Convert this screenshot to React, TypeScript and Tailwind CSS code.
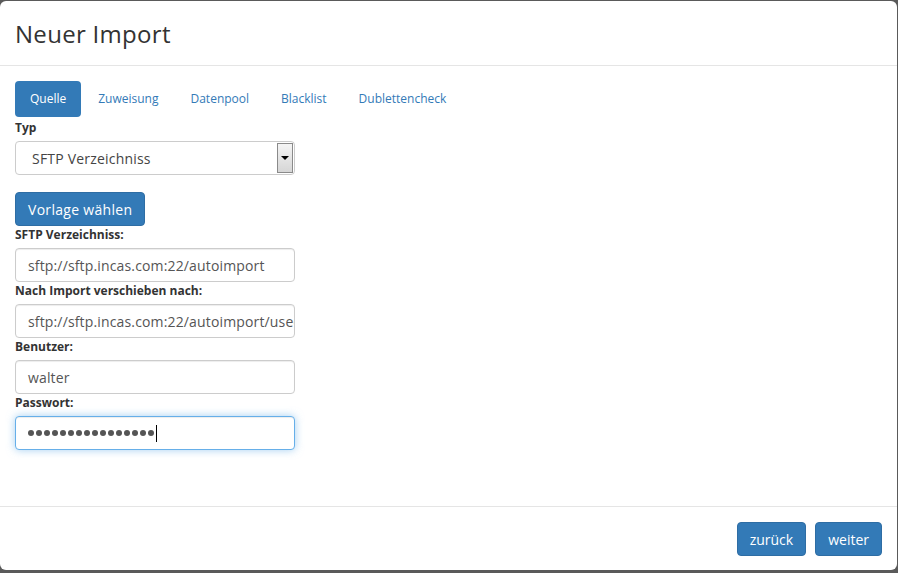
import React from "react";

const font = { fontFamily: '"Open Sans", "Noto Sans", sans-serif' };

function Label({ children }: { children: React.ReactNode }) {
  return (
    <div className="text-[12px] font-bold leading-[17px] text-[#333] mb-[5px]">{children}</div>
  );
}

function Input({ value }: { value: string }) {
  return (
    <div className="w-[280px] h-[34px] border border-[#ccc] rounded-[4px] bg-white px-[12px] flex items-center text-[14px] tracking-[0.15px] text-[#555] overflow-hidden whitespace-nowrap shadow-[inset_0_1px_1px_rgba(0,0,0,0.075)]">
      {value}
    </div>
  );
}

export default function App() {
  const tabs = ["Zuweisung", "Datenpool", "Blacklist", "Dublettencheck"];
  return (
    <div className="w-[898px] h-[573px] bg-[#5a5a5a] pt-[1px] pr-[1px] pb-[3px]" style={font}>
      <div className="w-full h-full bg-white rounded-[6px] flex flex-col">
        <div className="h-[65px] border-b border-[#e5e5e5] px-[15px] flex items-center">
          <h4 className="text-[24px] tracking-[0.3px] text-[#333] leading-none pt-[1px]">Neuer Import</h4>
        </div>
        <div className="flex-1 px-[15px] pt-[15px]">
          <div className="flex items-center h-[36px] mb-[2px]">
            <div className="h-[36px] px-[15px] flex items-center bg-[#337ab7] text-white text-[12px] rounded-[4px]">
              Quelle
            </div>
            {tabs.map((t) => (
              <div key={t} className="ml-[2px] h-[36px] px-[15px] flex items-center text-[#337ab7] text-[12px]">
                {t}
              </div>
            ))}
          </div>
          <Label>Typ</Label>
          <div className="w-[280px] h-[34px] border border-[#ccc] rounded-[4px] bg-white flex items-center relative">
            <span className="pl-[16px] text-[14px] tracking-[0.2px] text-[#444]">SFTP Verzeichniss</span>
            <div className="absolute right-[1px] top-[1px] bottom-[1px] w-[16px] border border-[#8a8a8a] bg-gradient-to-b from-[#f4f4f4] to-[#d6d6d6] flex items-center justify-center">
              <div className="w-0 h-0 border-l-[4px] border-r-[4px] border-t-[4px] border-l-transparent border-r-transparent border-t-black" />
            </div>
          </div>
          <div className="mt-[17px]">
            <div className="inline-flex items-center h-[34px] px-[12px] bg-[#337ab7] border border-[#2e6da4] rounded-[4px] text-white text-[14px] tracking-[0.3px]">
              Vorlage wählen
            </div>
          </div>
          <Label>SFTP Verzeichniss:</Label>
          <Input value="sftp://sftp.incas.com:22/autoimport" />
          <Label>Nach Import verschieben nach:</Label>
          <Input value="sftp://sftp.incas.com:22/autoimport/used" />
          <Label>Benutzer:</Label>
          <Input value="walter" />
          <Label>Passwort:</Label>
          <div className="w-[280px] h-[34px] border border-[#66afe9] rounded-[4px] bg-white px-[12px] flex items-center text-[#555] shadow-[inset_0_1px_1px_rgba(0,0,0,0.075),0_0_8px_rgba(102,175,233,0.6)]">
            <span className="flex gap-[2px] items-center">
              {Array.from({ length: 16 }).map((_, i) => (
                <span key={i} className="w-[6px] h-[6px] rounded-full bg-[#555]" />
              ))}
            </span>
            <span className="ml-[2px] w-[1px] h-[17px] bg-black" />
          </div>
        </div>
        <div className="border-t border-[#e5e5e5] px-[15px] pt-[15px] pb-[14px] flex justify-end gap-[9px]">
          <div className="h-[34px] px-[12px] flex items-center bg-[#337ab7] border border-[#2e6da4] rounded-[4px] text-white text-[14px]">
            zurück
          </div>
          <div className="h-[34px] px-[12px] flex items-center bg-[#337ab7] border border-[#2e6da4] rounded-[4px] text-white text-[14px]">
            weiter
          </div>
        </div>
      </div>
    </div>
  );
}
